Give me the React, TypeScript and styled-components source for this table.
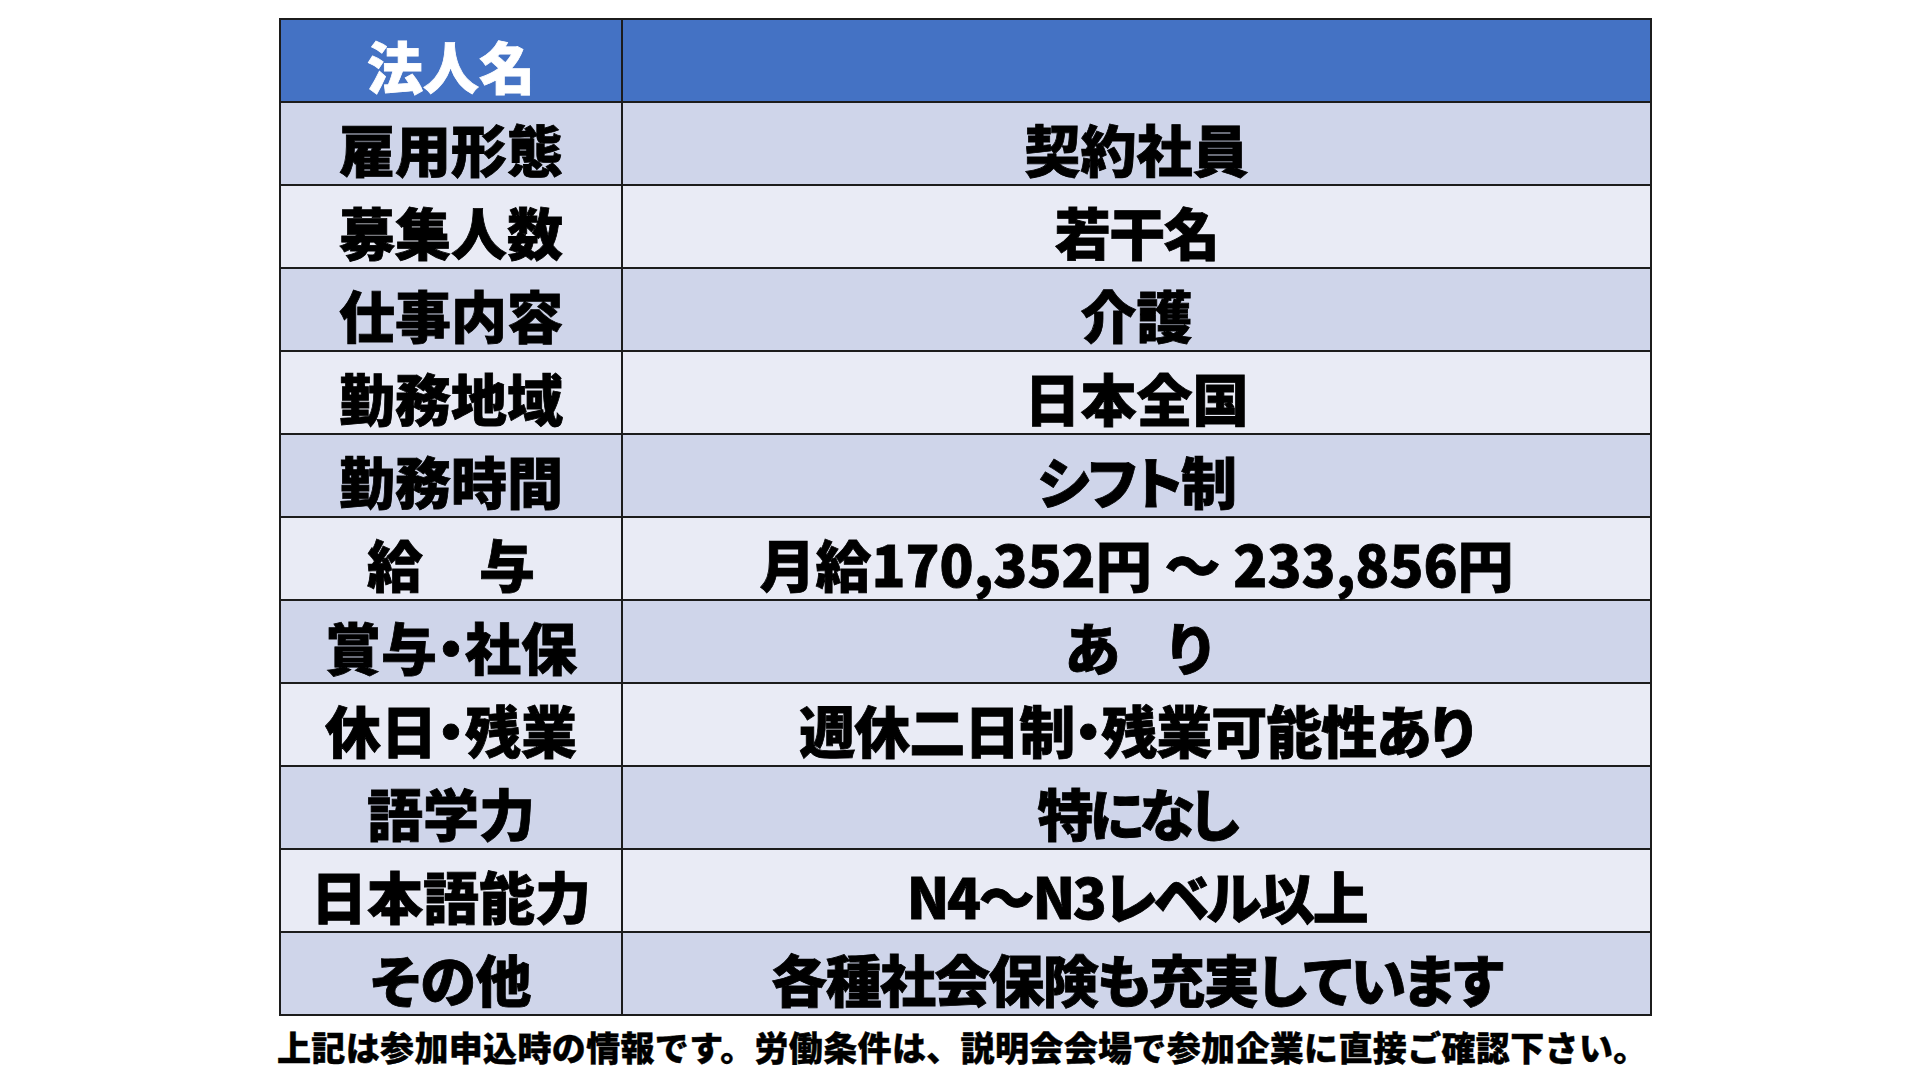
import React from "react";
import styled, { createGlobalStyle } from "styled-components";

const GlobalStyle = createGlobalStyle`
  html, body {
    margin: 0;
    padding: 0;
    background: #ffffff;
  }
  body {
    font-family: "Noto Sans CJK JP", "Noto Sans", sans-serif;
  }
`;

type Tone = "head" | "odd" | "even";

const tones: Record<Tone, string> = {
  head: "#4472c4",
  odd: "#cfd5ea",
  even: "#e9ebf5",
};

const Page = styled.main`
  width: 1920px;
  height: 1080px;
  box-sizing: border-box;
  padding: 18px 0 0 279px;
  overflow: hidden;
`;

const Sheet = styled.section`
  width: 1373px;
  display: flex;
  flex-direction: column;
`;

const Table = styled.div`
  display: grid;
  grid-template-columns: 340px 1fr;
  grid-auto-rows: 81px;
  gap: 2px;
  border: 2px solid #1c1c1c;
  background: #1c1c1c;
`;

const Cell = styled.div<{ $tone: Tone; $spacing?: number }>`
  background: ${(p) => tones[p.$tone]};
  color: ${(p) => (p.$tone === "head" ? "#ffffff" : "#000000")};
  display: flex;
  align-items: center;
  justify-content: center;
  box-sizing: border-box;
  padding-top: 9px;
  font-family: "Noto Sans CJK JP", "Noto Sans", sans-serif;
  font-weight: 900;
  font-size: 56px;
  line-height: 1;
  letter-spacing: ${(p) => p.$spacing ?? 0}px;
  -webkit-text-stroke: 0.8px currentColor;
  font-feature-settings: "palt" 1;
  white-space: pre;
`;

const Note = styled.p`
  margin: 14px 0 0 -2px;
  font-family: "Noto Sans CJK JP", "Noto Sans", sans-serif;
  font-weight: 900;
  font-size: 34px;
  line-height: 34px;
  letter-spacing: 0.35px;
  -webkit-text-stroke: 0.4px currentColor;
  color: #000000;
  white-space: nowrap;
`;

const rows: [string, string, number][] = [
  ["雇用形態", "契約社員", 0],
  ["募集人数", "若干名", -1.5],
  ["仕事内容", "介護", 0],
  ["勤務地域", "日本全国", 0],
  ["勤務時間", "シフト制", -1.5],
  ["給　与", "月給170,352円 ～ 233,856円", 0],
  ["賞与・社保", "あ　り", -4],
  ["休日・残業", "週休二日制・残業可能性あり", -1],
  ["語学力", "特になし", -4],
  ["日本語能力", "N4～N3レベル以上", -2.4],
  ["その他", "各種社会保険も充実しています", -1.7],
];

export default function App() {
  return (
    <>
      <GlobalStyle />
      <Page>
        <Sheet>
          <Table>
            <Cell $tone="head">法人名</Cell>
            <Cell $tone="head" />
            {rows.map(([label, value, spacing], i) => {
              const tone: Tone = i % 2 === 0 ? "odd" : "even";
              return (
                <React.Fragment key={label}>
                  <Cell $tone={tone}>{label}</Cell>
                  <Cell $tone={tone} $spacing={spacing}>
                    {value}
                  </Cell>
                </React.Fragment>
              );
            })}
          </Table>
          <Note>
            上記は参加申込時の情報です。労働条件は、説明会会場で参加企業に直接ご確認下さい。
          </Note>
        </Sheet>
      </Page>
    </>
  );
}
